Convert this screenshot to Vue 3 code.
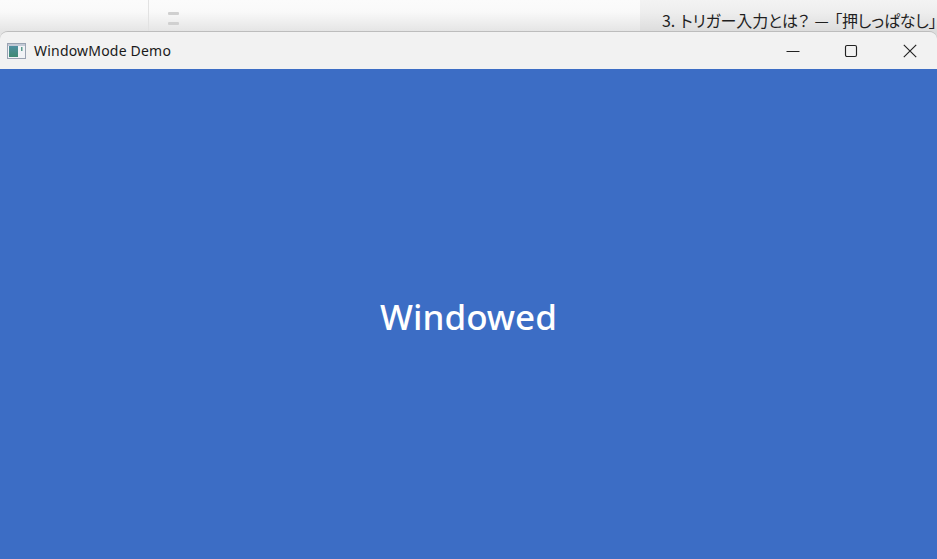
<script setup>
const title = 'WindowMode Demo'
const mode = 'Windowed'
const behind = '3. トリガー入力とは？ — 「押しっぱなし」'
</script>

<template>
  <div class="page">
    <div class="behind">
      <div class="side"></div>
      <div class="middle">
        <span class="handle"></span>
        <span class="handle"></span>
      </div>
      <div class="heading">{{ behind }}</div>
    </div>
    <div class="window">
      <header class="titlebar">
        <svg class="app-icon" width="19" height="16" viewBox="0 0 19 16">
          <defs>
            <linearGradient id="pane" x1="0" y1="0" x2="0" y2="1">
              <stop offset="0" stop-color="#4f8fa0" />
              <stop offset="1" stop-color="#3f8a72" />
            </linearGradient>
          </defs>
          <rect x="0.5" y="0.5" width="18" height="15" fill="#f1f3f6" stroke="#9aa3b2" />
          <rect x="1" y="1" width="17" height="2" fill="#c3cad6" />
          <rect x="2" y="3" width="9" height="11" fill="url(#pane)" />
          <rect x="14" y="4" width="1.5" height="4" fill="#5b9a8c" />
        </svg>
        <span class="title">{{ title }}</span>
        <div class="controls">
          <button class="control">
            <svg width="14" height="14" viewBox="0 0 14 14"><path d="M0.5 7.5H13.5" /></svg>
          </button>
          <button class="control">
            <svg width="14" height="14" viewBox="0 0 14 14"><rect x="1.5" y="1.5" width="11" height="11" rx="1.5" /></svg>
          </button>
          <button class="control">
            <svg width="14" height="14" viewBox="0 0 14 14"><path d="M0.8 0.8L13.2 13.2M13.2 0.8L0.8 13.2" /></svg>
          </button>
        </div>
      </header>
      <main class="content">
        <span class="mode">{{ mode }}</span>
      </main>
    </div>
  </div>
</template>

<style>
html, body { margin: 0; overflow: hidden; }
</style>

<style scoped>
.page {
  width: 937px;
  height: 559px;
  display: flex;
  flex-direction: column;
  overflow: hidden;
  font-family: "Noto Sans", "Noto Sans CJK JP", sans-serif;
}
.behind {
  flex: none;
  height: 42px;
  display: flex;
  background: linear-gradient(#fbfbfb 0, #f9f9f9 12px, #e4e4e4 32px, #e0e0e0 42px);
}
.side {
  width: 148px;
  border-right: 1px solid #e2e2e2;
}
.middle {
  flex: 1;
  display: flex;
  flex-direction: column;
  gap: 7px;
  padding: 12px 0 0 19px;
}
.handle {
  width: 11px;
  height: 3px;
  border-radius: 1px;
  background: #d0d0d0;
}
.heading {
  width: 297px;
  padding: 8px 0 0 22px;
  box-sizing: border-box;
  background: linear-gradient(#f3f3f3 0, #eeeeee 12px, #dcdcdc 32px);
  font-family: "Noto Sans CJK JP", sans-serif;
  font-feature-settings: "palt";
  font-size: 16px;
  line-height: 24px;
  color: #1f1f1f;
  white-space: nowrap;
  word-spacing: 2px;
  letter-spacing: -0.15px;
}
.window {
  flex: 1;
  margin-top: -11px;
  position: relative;
  display: flex;
  flex-direction: column;
  border-top: 1px solid #bdbdbd;
  border-radius: 8px 8px 0 0;
  overflow: hidden;
}
.titlebar {
  flex: none;
  height: 37px;
  padding: 0 0 0 7px;
  box-sizing: border-box;
  display: flex;
  align-items: center;
  background: #f2f2f2;
}
.app-icon { flex: none; }
.title {
  margin-left: 8px;
  font-size: 14px;
  letter-spacing: 0.2px;
  color: #1a1a1a;
}
.controls {
  margin-left: auto;
  margin-right: -2px;
  display: flex;
}
.control {
  width: 58.5px;
  height: 36px;
  padding: 0;
  border: 0;
  background: transparent;
  display: flex;
  align-items: center;
  justify-content: center;
}
.control svg {
  fill: none;
  stroke: #222;
  stroke-width: 1.15;
}
.content {
  flex: 1;
  display: flex;
  align-items: center;
  justify-content: center;
  background: #3c6dc5;
}
.mode {
  padding-top: 4px;
  font-size: 35px;
  font-weight: 500;
  color: #fff;
}
</style>
